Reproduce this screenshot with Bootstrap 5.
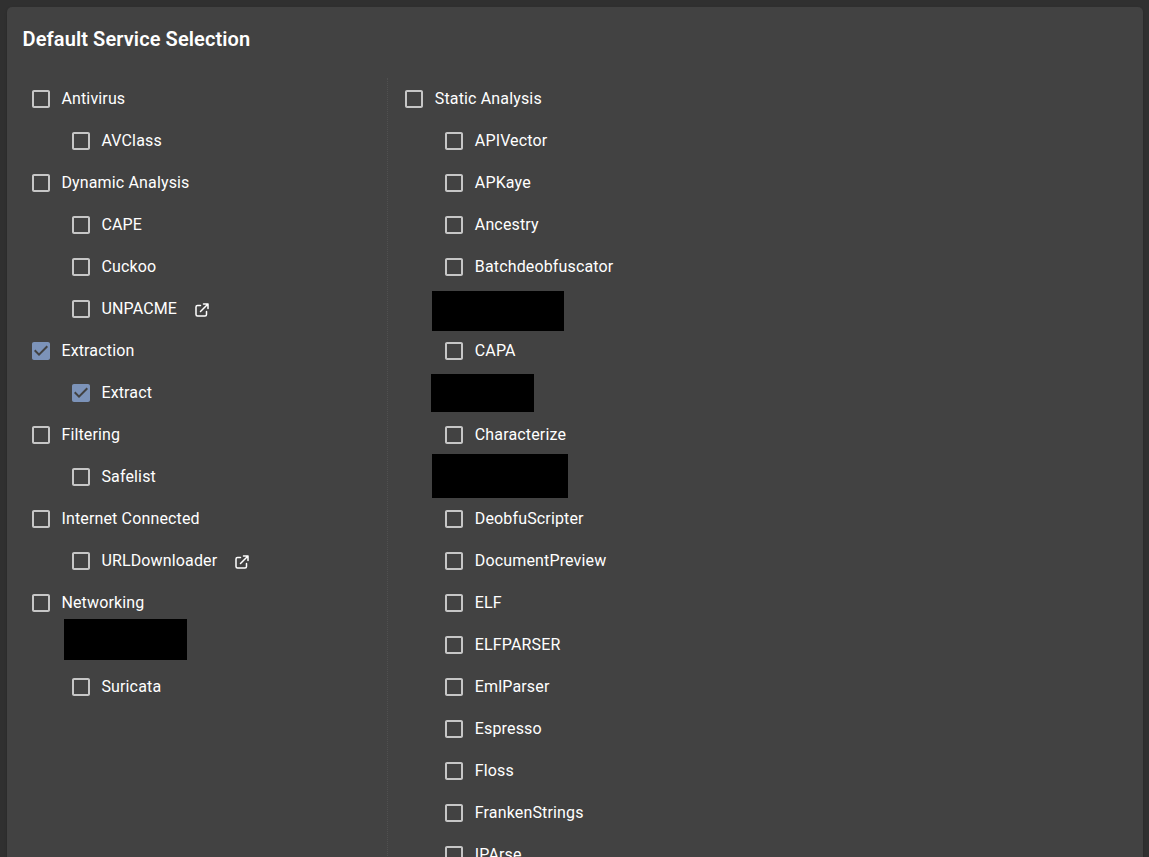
<!DOCTYPE html>
<html lang="en">
<head>
<meta charset="utf-8">
<meta name="viewport" content="width=device-width, initial-scale=1">
<title>Default Service Selection</title>
<link href="https://cdn.jsdelivr.net/npm/bootstrap@5.3.0/dist/css/bootstrap.min.css" rel="stylesheet">
<style>
  body { background: #303030; color: #fff; font-family: Roboto, "Liberation Sans", sans-serif; font-size: 16px; line-height: 24px; letter-spacing: .15px; height: 100vh; overflow: hidden; }
  .panel { margin: 7px 6px 0 7px; height: 1000px; padding: 16px; background: #424242; border-radius: 5px; box-shadow: 0 2px 1px -1px rgba(0,0,0,.2), 0 1px 1px rgba(0,0,0,.14), 0 1px 3px rgba(0,0,0,.12); }
  .panel-title { font-size: 20px; line-height: 32px; font-weight: 600; letter-spacing: .1px; margin: 0 0 23px -.4px; }
  .services { height: 900px; }
  .col-left { width: 365px; padding-left: 6px; border-right: 1px dotted #505050; }
  .col-right { padding-left: 14px; }
  .service { height: 42px; }
  .service.child { padding-left: 40px; }
  .service svg { flex: none; }
  .box { width: 24px; height: 24px; fill: #c6c6c6; }
  .box.on { fill: #7c93b9; }
  .name { margin-left: 8.4px; }
  .col-right .name { margin-left: 8.8px; }
  .ext { width: 18px; height: 18px; margin: 2px 0 0 15.8px; fill: none; stroke: #fff; stroke-width: 2; stroke-linecap: round; stroke-linejoin: round; }
  .redacted { position: absolute; background: #000; }
</style>
</head>
<body>
<svg class="d-none" xmlns="http://www.w3.org/2000/svg">
  <symbol id="off" viewBox="0 0 24 24"><path d="M19 5v14H5V5h14m0-2H5c-1.1 0-2 .9-2 2v14c0 1.1.9 2 2 2h14c1.1 0 2-.9 2-2V5c0-1.1-.9-2-2-2z"/></symbol>
  <symbol id="on" viewBox="0 0 24 24"><path d="M19 3H5c-1.11 0-2 .9-2 2v14c0 1.1.89 2 2 2h14c1.11 0 2-.9 2-2V5c0-1.1-.89-2-2-2zm-9 14l-5-5 1.41-1.41L10 14.17l7.59-7.59L19 8l-9 9z"/></symbol>
  <symbol id="external" viewBox="0 0 24 24"><path d="M10 6H6a2 2 0 00-2 2v10a2 2 0 002 2h10a2 2 0 002-2v-4M14 4h6m0 0v6m0-6L10 14"/></symbol>
</svg>
<main class="panel">
  <h1 class="panel-title">Default Service Selection</h1>
  <div class="services d-flex">
    <section class="col-left flex-shrink-0">
      <div class="service d-flex align-items-center"><svg class="box"><use href="#off"/></svg><span class="name">Antivirus</span></div>
      <div class="service child d-flex align-items-center"><svg class="box"><use href="#off"/></svg><span class="name">AVClass</span></div>
      <div class="service d-flex align-items-center"><svg class="box"><use href="#off"/></svg><span class="name">Dynamic Analysis</span></div>
      <div class="service child d-flex align-items-center"><svg class="box"><use href="#off"/></svg><span class="name">CAPE</span></div>
      <div class="service child d-flex align-items-center"><svg class="box"><use href="#off"/></svg><span class="name">Cuckoo</span></div>
      <div class="service child d-flex align-items-center"><svg class="box"><use href="#off"/></svg><span class="name">UNPACME</span><svg class="ext"><use href="#external"/></svg></div>
      <div class="service d-flex align-items-center"><svg class="box on"><use href="#on"/></svg><span class="name">Extraction</span></div>
      <div class="service child d-flex align-items-center"><svg class="box on"><use href="#on"/></svg><span class="name">Extract</span></div>
      <div class="service d-flex align-items-center"><svg class="box"><use href="#off"/></svg><span class="name">Filtering</span></div>
      <div class="service child d-flex align-items-center"><svg class="box"><use href="#off"/></svg><span class="name">Safelist</span></div>
      <div class="service d-flex align-items-center"><svg class="box"><use href="#off"/></svg><span class="name">Internet Connected</span></div>
      <div class="service child d-flex align-items-center"><svg class="box"><use href="#off"/></svg><span class="name">URLDownloader</span><svg class="ext"><use href="#external"/></svg></div>
      <div class="service d-flex align-items-center"><svg class="box"><use href="#off"/></svg><span class="name">Networking</span></div>
      <div class="service position-relative"><span class="redacted" style="left:35px;top:-5px;width:123px;height:41px"></span></div>
      <div class="service child d-flex align-items-center"><svg class="box"><use href="#off"/></svg><span class="name">Suricata</span></div>
    </section>
    <section class="col-right flex-grow-1">
      <div class="service d-flex align-items-center"><svg class="box"><use href="#off"/></svg><span class="name">Static Analysis</span></div>
      <div class="service child d-flex align-items-center"><svg class="box"><use href="#off"/></svg><span class="name">APIVector</span></div>
      <div class="service child d-flex align-items-center"><svg class="box"><use href="#off"/></svg><span class="name">APKaye</span></div>
      <div class="service child d-flex align-items-center"><svg class="box"><use href="#off"/></svg><span class="name">Ancestry</span></div>
      <div class="service child d-flex align-items-center"><svg class="box"><use href="#off"/></svg><span class="name">Batchdeobfuscator</span></div>
      <div class="service position-relative"><span class="redacted" style="left:30px;top:3px;width:132px;height:40px"></span></div>
      <div class="service child d-flex align-items-center"><svg class="box"><use href="#off"/></svg><span class="name">CAPA</span></div>
      <div class="service position-relative"><span class="redacted" style="left:29px;top:2px;width:103px;height:38px"></span></div>
      <div class="service child d-flex align-items-center"><svg class="box"><use href="#off"/></svg><span class="name">Characterize</span></div>
      <div class="service position-relative"><span class="redacted" style="left:30px;top:-2px;width:136px;height:44px"></span></div>
      <div class="service child d-flex align-items-center"><svg class="box"><use href="#off"/></svg><span class="name">DeobfuScripter</span></div>
      <div class="service child d-flex align-items-center"><svg class="box"><use href="#off"/></svg><span class="name">DocumentPreview</span></div>
      <div class="service child d-flex align-items-center"><svg class="box"><use href="#off"/></svg><span class="name">ELF</span></div>
      <div class="service child d-flex align-items-center"><svg class="box"><use href="#off"/></svg><span class="name">ELFPARSER</span></div>
      <div class="service child d-flex align-items-center"><svg class="box"><use href="#off"/></svg><span class="name">EmlParser</span></div>
      <div class="service child d-flex align-items-center"><svg class="box"><use href="#off"/></svg><span class="name">Espresso</span></div>
      <div class="service child d-flex align-items-center"><svg class="box"><use href="#off"/></svg><span class="name">Floss</span></div>
      <div class="service child d-flex align-items-center"><svg class="box"><use href="#off"/></svg><span class="name">FrankenStrings</span></div>
      <div class="service child d-flex align-items-center"><svg class="box"><use href="#off"/></svg><span class="name">IPArse</span></div>
    </section>
  </div>
</main>
<script src="https://cdn.jsdelivr.net/npm/bootstrap@5.3.0/dist/js/bootstrap.bundle.min.js"></script>
</body>
</html>
